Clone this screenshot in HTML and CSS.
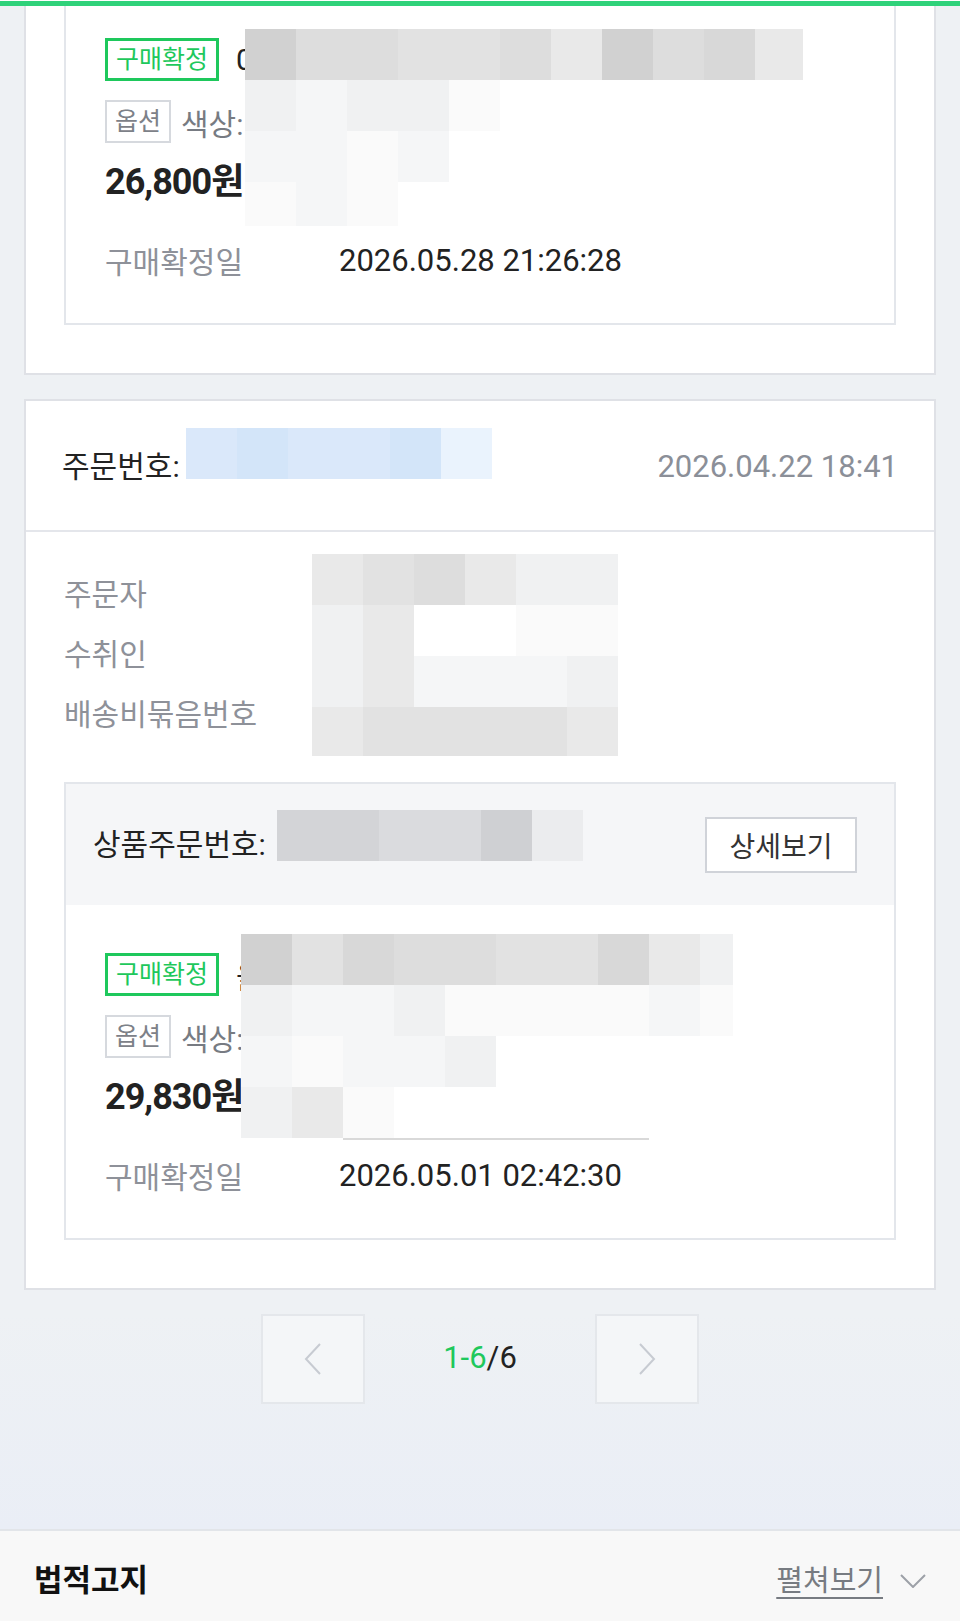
FILE: index.html
```html
<!DOCTYPE html>
<html lang="ko">

<head>
  <meta charset="UTF-8">
  <meta name="viewport" content="width=device-width, initial-scale=1.0">
  <title>주문내역</title>
  <link rel="stylesheet" href="styles.css">
</head>

<body>
  <div class="progress"></div>

  <div class="order-list">
    <!-- order card, scrolled past its top -->
    <div class="order-card cut">
      <div class="order-body">
        <div class="product cut">
          <div class="item first">
            <div class="item-main">
              <div class="title-row">
                <span class="badge-done">구매확정</span>
                <span class="item-title">0</span>
              </div>
              <div class="option-row">
                <span class="badge-opt">옵션</span>
                <span class="option-text">색상:</span>
              </div>
              <div class="price">26,800원</div>
              <div class="confirm-row">
                <span class="confirm-label">구매확정일</span>
                <span class="confirm-date">2026.05.28 21:26:28</span>
              </div>

              <div class="mosaic mosaic-a">
                <div class="mrow"><i class="s8"></i><i class="s6"></i><i class="s6"></i><i class="s5"></i><i class="s5"></i><i class="s6"></i><i class="s4"></i><i class="s8"></i><i class="s6"></i><i class="s7"></i><i class="s4"></i></div>
                <div class="mrow"><i class="s3"></i><i class="s2"></i><i class="s3"></i><i class="s3"></i><i class="s1"></i></div>
                <div class="mrow"><i class="s2"></i><i class="s2"></i><i class="s1"></i><i class="s2"></i></div>
                <div class="mrow"><i class="s1"></i><i class="s2"></i><i class="s1"></i></div>
              </div>
            </div>
          </div>
        </div>
      </div>
    </div>

    <div class="order-card">
      <div class="order-head">
        <div class="order-no">
          <span>주문번호:</span>
          <div class="mosaic mosaic-b">
            <div class="mrow"><i class="b1"></i><i class="b2"></i><i class="b1"></i><i class="b1"></i><i class="b2"></i><i class="b3"></i></div>
          </div>
        </div>
        <span class="order-date">2026.04.22 18:41</span>
      </div>

      <div class="order-body">
        <div class="info">
          <div class="info-row">주문자</div>
          <div class="info-row">수취인</div>
          <div class="info-row">배송비묶음번호</div>

          <div class="mosaic mosaic-c">
            <div class="mrow"><i class="s4"></i><i class="s5"></i><i class="s6"></i><i class="s4"></i><i class="s3"></i><i class="s3"></i></div>
            <div class="mrow"><i class="s3"></i><i class="s4"></i><i class="s0"></i><i class="s0"></i><i class="s1"></i><i class="s1"></i></div>
            <div class="mrow"><i class="s3"></i><i class="s4"></i><i class="s2"></i><i class="s2"></i><i class="s2"></i><i class="s3"></i></div>
            <div class="mrow"><i class="s4"></i><i class="s5"></i><i class="s5"></i><i class="s5"></i><i class="s5"></i><i class="s4"></i></div>
          </div>
        </div>

        <div class="product">
          <div class="product-head">
            <div class="order-no">
              <span>상품주문번호:</span>
              <div class="mosaic mosaic-d">
                <div class="mrow"><i class="d1"></i><i class="d1"></i><i class="d2"></i><i class="d2"></i><i class="d3"></i><i class="d4"></i></div>
              </div>
            </div>
            <button class="detail-btn">상세보기</button>
          </div>

          <div class="item">
            <div class="item-main">
              <div class="title-row">
                <span class="badge-done">구매확정</span>
                <span class="item-title">올</span>
              </div>
              <div class="option-row">
                <span class="badge-opt">옵션</span>
                <span class="option-text">색상:</span>
              </div>
              <div class="price">29,830원</div>
              <div class="confirm-row">
                <span class="confirm-label">구매확정일</span>
                <span class="confirm-date">2026.05.01 02:42:30</span>
              </div>

              <div class="mosaic mosaic-e">
                <div class="mrow"><i class="s8"></i><i class="s5"></i><i class="s7"></i><i class="s6"></i><i class="s6"></i><i class="s5"></i><i class="s5"></i><i class="s7"></i><i class="s4"></i><i class="s3"></i></div>
                <div class="mrow"><i class="s3"></i><i class="s2"></i><i class="s2"></i><i class="s3"></i><i class="s1"></i><i class="s1"></i><i class="s1"></i><i class="s1"></i><i class="s2"></i><i class="s1"></i></div>
                <div class="mrow"><i class="s2"></i><i class="s1"></i><i class="s2"></i><i class="s2"></i><i class="s3"></i></div>
                <div class="mrow"><i class="s3"></i><i class="s4"></i><i class="s1"></i></div>
                <div class="mline"></div>
              </div>
            </div>
          </div>
        </div>
      </div>
    </div>
  </div>

  <div class="pager-area">
    <div class="pager">
      <button class="pager-btn" aria-label="이전">
        <svg width="18" height="32" viewBox="0 0 18 32"><polyline points="16,1 2,16 16,31" fill="none" stroke="#c7cbd2" stroke-width="2"/></svg>
      </button>
      <div class="pager-count"><span class="current">1-6</span>/6</div>
      <button class="pager-btn" aria-label="다음">
        <svg width="18" height="32" viewBox="0 0 18 32"><polyline points="2,1 16,16 2,31" fill="none" stroke="#c7cbd2" stroke-width="2"/></svg>
      </button>
    </div>
  </div>

  <div class="legal">
    <span class="legal-title">법적고지</span>
    <a href="#" class="legal-toggle">
      <span>펼쳐보기</span>
      <svg width="26" height="14" viewBox="0 0 26 14"><polyline points="1,1 13,13 25,1" fill="none" stroke="#9da1a8" stroke-width="2"/></svg>
    </a>
  </div>
</body>

</html>
```

FILE: styles.css
```css
* {
  box-sizing: border-box;
}

body {
  margin: 0;
  background-color: #eef1f4;
  font-family: Roboto, "Noto Sans CJK KR", sans-serif;
  color: #222;
}

.progress {
  height: 6px;
  border-top: 1px solid #fff;
  background-color: #2fd27a;
}

.order-list {
  padding: 0 24px;
}

.order-card {
  background-color: #fff;
  border: 2px solid #dfe1e6;
  margin-bottom: 24px;
}

.order-card.cut {
  border-top: none;
}

.order-head {
  display: flex;
  justify-content: space-between;
  align-items: center;
  height: 131px;
  padding: 2px 36px 0 36px;
  border-bottom: 2px solid #e4e6eb;
}

.order-no {
  display: flex;
  align-items: center;
  font-size: 30px;
  line-height: 40px;
  color: #222;
}

.order-date {
  font-size: 31px;
  color: #8b8f98;
}

.order-body {
  padding: 0 38px 48px;
}

.info {
  position: relative;
  padding-top: 33px;
  margin-bottom: 37px;
}

.info-row {
  height: 60px;
  line-height: 60px;
  font-size: 30px;
  color: #8e9199;
}

.product {
  border: 2px solid #e3e6eb;
}

.product.cut {
  border-top: none;
}

.product-head {
  display: flex;
  justify-content: space-between;
  align-items: center;
  height: 121px;
  padding: 0 37px 0 27px;
  background-color: #f5f6f8;
}

.detail-btn {
  width: 152px;
  height: 56px;
  border: 2px solid #d0d3d9;
  background-color: #fff;
  font-family: inherit;
  font-size: 28px;
  color: #333;
  padding: 0;
}

.item {
  padding: 48px 37px 43px 39px;
}

.item.first {
  padding-top: 32px;
}

.item-main {
  position: relative;
}

.title-row,
.option-row {
  display: flex;
  align-items: center;
  height: 43px;
}

.option-row {
  margin-top: 19px;
}

.badge-done,
.badge-opt {
  display: inline-flex;
  align-items: center;
  height: 43px;
  font-size: 25px;
  line-height: 1;
}

.badge-done {
  border: 3px solid #1ec85c;
  color: #1ec85c;
  padding: 0 8px;
}

.badge-opt {
  border: 2px solid #d6d9de;
  color: #7d8188;
  padding: 0 8px;
}

.item-title {
  margin-left: 17px;
  font-size: 30px;
}

.option-text {
  margin-left: 10px;
  font-size: 30px;
  color: #777b82;
}

.price {
  margin-top: 19px;
  height: 40px;
  line-height: 40px;
  font-size: 36px;
  font-weight: bold;
  letter-spacing: -1px;
}

.confirm-row {
  display: flex;
  align-items: center;
  height: 40px;
  margin-top: 38px;
}

.confirm-label {
  width: 234px;
  font-size: 30px;
  color: #8e9199;
}

.confirm-date {
  font-size: 31px;
  color: #222;
}

/* pixelated blocks covering private data */
.mosaic {
  overflow: hidden;
}

.mosaic-a,
.mosaic-c,
.mosaic-e {
  position: absolute;
}

.mosaic-a {
  left: 140px;
  top: -9px;
  width: 558px;
  height: 197px;
}

.mosaic-b {
  width: 306px;
  height: 51px;
  margin: 0 0 27px 6px;
}

.mosaic-c {
  left: 248px;
  top: 22px;
  width: 306px;
  height: 202px;
}

.mosaic-d {
  width: 306px;
  height: 51px;
  margin: 0 0 18px 11px;
}

.mosaic-e {
  left: 136px;
  top: -19px;
  width: 492px;
  height: 206px;
}

.mrow {
  display: flex;
  height: 51px;
}

.mrow i {
  flex: 0 0 51px;
  height: 51px;
}

.mline {
  height: 2px;
  margin-left: 102px;
  width: 306px;
  background-color: #d9d9d9;
}

.s0 { background-color: transparent; }
.s1 { background-color: #fafafa; }
.s2 { background-color: #f5f6f7; }
.s3 { background-color: #f0f1f2; }
.s4 { background-color: #e9e9e9; }
.s5 { background-color: #e2e2e2; }
.s6 { background-color: #dddddd; }
.s7 { background-color: #d8d8d8; }
.s8 { background-color: #d1d1d1; }

.b1 { background-color: #dae8fa; }
.b2 { background-color: #d3e5f9; }
.b3 { background-color: #eaf3fd; }

.d1 { background-color: #d3d4d7; }
.d2 { background-color: #dadbde; }
.d3 { background-color: #cfd0d3; }
.d4 { background-color: #ebecee; }

.pager-area {
  padding: 0 0 125px;
  background: linear-gradient(#eef1f4, #eaeef6);
}

.pager {
  display: flex;
  justify-content: center;
  align-items: center;
}

.pager-btn {
  display: flex;
  justify-content: center;
  align-items: center;
  width: 104px;
  height: 90px;
  border: 2px solid #e4e7eb;
  background-color: #f4f6f8;
  padding: 0;
}

.pager-count {
  width: 230px;
  text-align: center;
  font-size: 31px;
  color: #222;
  padding-bottom: 4px;
}

.pager-count .current {
  color: #1ec85c;
}

.legal {
  display: flex;
  justify-content: space-between;
  align-items: center;
  height: 136px;
  padding: 31px 34px 65px;
  border-top: 2px solid #e2e5e9;
  background-color: #f8f8f8;
}

.legal-title {
  font-size: 31px;
  font-weight: bold;
  color: #111;
  line-height: 40px;
}

.legal-toggle {
  display: flex;
  align-items: center;
  font-size: 29px;
  color: #777b81;
  line-height: 40px;
  text-decoration: none;
}

.legal-toggle span {
  text-decoration: underline;
  text-underline-offset: 6px;
}

.legal-toggle svg {
  margin-left: 17px;
}
```
